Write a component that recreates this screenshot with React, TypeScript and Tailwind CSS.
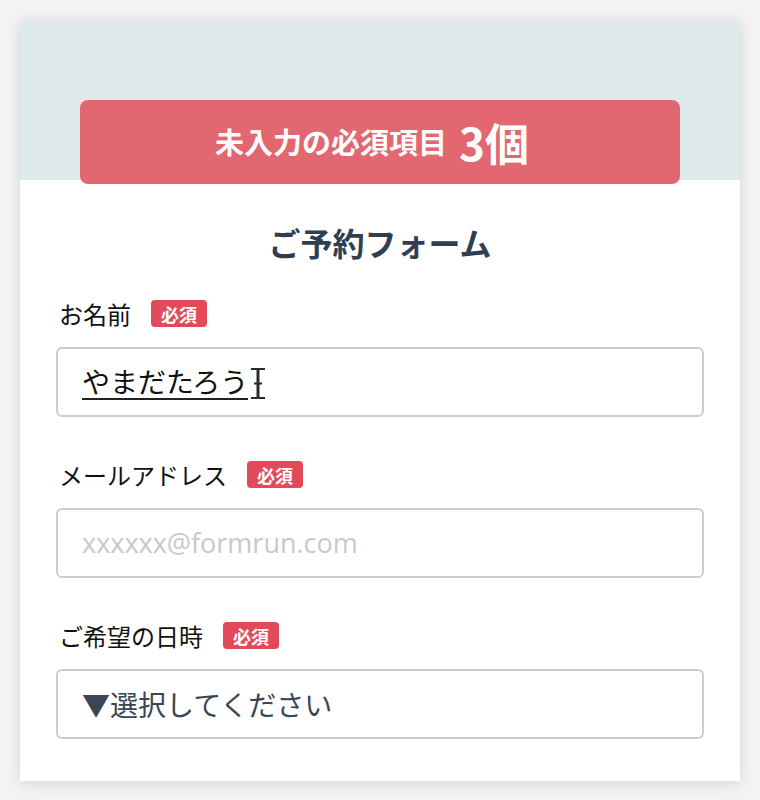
const jp = "font-['Noto_Sans_CJK_JP','Noto_Sans',sans-serif]";

function Required() {
  return (
    <span className="inline-flex h-[27px] w-[56px] items-center justify-center rounded-[4px] bg-[#e24a59] text-[18px] font-bold leading-none text-white">
      必須
    </span>
  );
}

function Label({ text }: { text: string }) {
  return (
    <div className="flex items-center gap-[20px] pl-[3px]">
      <span className="text-[24px] leading-[27px] text-[#111]">{text}</span>
      <Required />
    </div>
  );
}

function TextCursor() {
  return (
    <svg width="16" height="33" viewBox="0 0 16 33" className="ml-[2px] mt-[2px]">
      <path d="M1 2h14M1 31h14M4 16.5h8" stroke="#2a2a2a" strokeWidth="2" fill="none" />
      <path d="M8 2v29" stroke="#2a2a2a" strokeWidth="3" fill="none" />
    </svg>
  );
}

export default function App() {
  return (
    <div className={`min-h-[800px] bg-[#f3f3f3] p-[20px] ${jp}`}>
      <div className="bg-white shadow-[0_2px_14px_rgba(0,0,0,0.12)]">
        <div className="h-[160px] bg-[#dfeaec] px-[60px] pt-[80px]">
          <div className="flex h-[84px] items-center justify-center rounded-[8px] bg-[#e36770] pr-[16px] text-white">
            <span className="text-[29px] font-bold">未入力の必須項目</span>
            <span className="ml-[12px] text-[44px] font-bold leading-none">3個</span>
          </div>
        </div>

        <div className="px-[36px] pb-[42px]">
          <h1 className="mt-[42px] text-center text-[32px] font-bold leading-[40px] text-[#2f3e50]">
            ご予約フォーム
          </h1>

          <div className="mt-[38px]">
            <Label text="お名前" />
            <div className="mt-[20px] flex h-[70px] items-center rounded-[6px] border-2 border-[#cdcdcd] px-[24px]">
              <span className="border-b-2 border-[#222] text-[28px] leading-[34px] text-[#111]">やまだたろう</span>
              <TextCursor />
            </div>
          </div>

          <div className="mt-[44px]">
            <Label text="メールアドレス" />
            <div className="mt-[20px] flex h-[70px] items-center rounded-[6px] border-2 border-[#cdcdcd] px-[24px]">
              <span className="font-['Open_Sans','Noto_Sans_CJK_JP',sans-serif] text-[27px] text-[#c6c9cf]">
                xxxxxx@formrun.com
              </span>
            </div>
          </div>

          <div className="mt-[44px]">
            <Label text="ご希望の日時" />
            <div className="mt-[20px] flex h-[70px] items-center rounded-[6px] border-2 border-[#cdcdcd] px-[24px]">
              <span className="text-[28px] text-[#3a4555]">▼選択してください</span>
            </div>
          </div>
        </div>
      </div>
    </div>
  );
}
